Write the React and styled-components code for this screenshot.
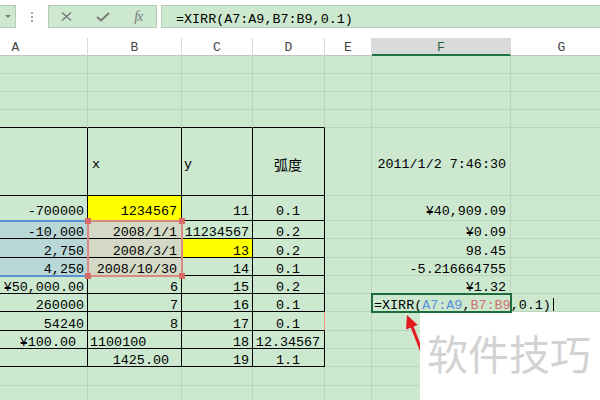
import React from 'react';
import styled, { createGlobalStyle } from 'styled-components';

const GREEN = '#cce8cf';
const GRID = '#b9d6bc';
const YELLOW = '#ffff00';
const BLUE_FILL = '#b9d7d6';
const PINK_FILL = '#d4d9c6';
const MONO = '"Liberation Mono", "DejaVu Sans Mono", monospace';
const CJK = '"Noto Sans CJK SC", "Noto Sans", sans-serif';

const COLS = ['A', 'B', 'C', 'D', 'E', 'F', 'G'];
const WIDTHS = [144, 94, 71, 72, 47, 139, 102];
const TEMPLATE = WIDTHS.map((w) => `${w}px`).join(' ');

const rows = [
  { h: 18 },
  { h: 18 },
  { h: 18 },
  { h: 18, edge: true },
  {
    h: 68, pb: 25, table: true, cells: {
      B: { t: 'x', a: 'left', pl: 4 },
      C: { t: 'y', a: 'left' },
      D: { t: '弧度', a: 'center', cjk: true },
      F: { t: '2011/1/2 7:46:30', pr: 4 },
    },
  },
  {
    h: 25, pb: 3, table: true, cells: {
      A: { t: '-700000' },
      B: { t: '1234567', bg: YELLOW, pr: 4 },
      C: { t: '11' },
      D: { t: '0.1', a: 'center' },
      F: { t: '¥40,909.09', pr: 4 },
    },
  },
  {
    h: 18, table: true, cells: {
      A: { t: '-10,000', bg: BLUE_FILL },
      B: { t: '2008/1/1', bg: PINK_FILL, pr: 4 },
      C: { t: '11234567' },
      D: { t: '0.2', a: 'center' },
      F: { t: '¥0.09', pr: 4 },
    },
  },
  {
    h: 19, table: true, cells: {
      A: { t: '2,750', bg: BLUE_FILL },
      B: { t: '2008/3/1', bg: PINK_FILL, pr: 4 },
      C: { t: '13', bg: YELLOW },
      D: { t: '0.2', a: 'center' },
      F: { t: '98.45', pr: 4 },
    },
  },
  {
    h: 18, table: true, cells: {
      A: { t: '4,250', bg: BLUE_FILL },
      B: { t: '2008/10/30', bg: PINK_FILL, pr: 4 },
      C: { t: '14' },
      D: { t: '0.1', a: 'center' },
      F: { t: '-5.216664755', pr: 4 },
    },
  },
  {
    h: 18, table: true, cells: {
      A: { t: '¥50,000.00' },
      B: { t: '6' },
      C: { t: '15' },
      D: { t: '0.2', a: 'center' },
      F: { t: '¥1.32', pr: 4 },
    },
  },
  {
    h: 18, table: true, cells: {
      A: { t: '260000' },
      B: { t: '7' },
      C: { t: '16' },
      D: { t: '0.1', a: 'center' },
      F: { edit: true },
    },
  },
  {
    h: 19, table: true, cells: {
      A: { t: '54240' },
      B: { t: '8' },
      C: { t: '17' },
      D: { t: '0.1', a: 'center', rb: '#f19a74' },
    },
  },
  {
    h: 18, table: true, cells: {
      A: { t: '¥100.00', pr: 11 },
      B: { t: '1100100', a: 'left' },
      C: { t: '18' },
      D: { t: '12.34567', a: 'center' },
    },
  },
  {
    h: 18, table: true, cells: {
      B: { t: '1425.00', pr: 12 },
      C: { t: '19' },
      D: { t: '1.1', a: 'center' },
    },
  },
  { h: 19 },
  { h: 18 },
];

const GlobalStyle = createGlobalStyle`
  html, body {
    margin: 0;
    padding: 0;
    background: #fff;
  }
  body {
    font-family: ${MONO};
  }
`;

const Page = styled.div`
  position: relative;
  width: 600px;
  height: 400px;
  overflow: hidden;
  background: #fff;
`;

const Toolbar = styled.div`
  display: flex;
  align-items: flex-start;
  height: 38px;
  padding-top: 5px;
  box-sizing: border-box;
`;

const NameTail = styled.div`
  width: 16px;
  height: 23px;
  box-sizing: border-box;
  background: ${GREEN};
  border: 1px solid #b7cbb8;
  border-left: none;
  display: flex;
  align-items: center;
  justify-content: center;

  &::after {
    content: '';
    border-left: 3px solid transparent;
    border-right: 3px solid transparent;
    border-top: 3px solid #777;
  }
`;

const Grip = styled.div`
  width: 32px;
  height: 23px;
  display: flex;
  flex-direction: column;
  align-items: center;
  justify-content: center;
  gap: 2px;
`;

const GripDot = styled.span`
  width: 2px;
  height: 2px;
  background: #a8a8a8;
`;

const IconBox = styled.div`
  width: 109px;
  height: 23px;
  box-sizing: border-box;
  background: ${GREEN};
  border: 1px solid #b7cbb8;
  display: flex;
  align-items: center;
`;

const IconSlot = styled.div`
  width: 37px;
  display: flex;
  justify-content: center;
  align-items: center;
  color: #777;
`;

const Fx = styled.span`
  font-family: "Liberation Serif", serif;
  font-style: italic;
  font-size: 14px;
  color: #7a7a7a;
  letter-spacing: -1px;
`;

const FormulaBox = styled.div`
  flex: 1;
  margin-left: 4px;
  height: 23px;
  box-sizing: border-box;
  background: ${GREEN};
  border: 1px solid #b7cbb8;
  border-right: none;
  display: flex;
  align-items: flex-end;
  padding: 0 0 2px 14px;
  font-size: 13.4px;
  line-height: 11px;
  color: #000;
  white-space: nowrap;
`;

const HeaderRow = styled.div`
  display: grid;
  grid-template-columns: ${TEMPLATE};
  height: 18px;
  margin-left: -56px;
  width: 669px;
`;

const HeaderCell = styled.div`
  box-sizing: border-box;
  display: flex;
  align-items: flex-end;
  justify-content: center;
  border-right: 1px solid #dadada;
  border-bottom: ${(p) => (p.$active ? '2px solid #217346' : '1px solid #c4c4c4')};
  background: ${(p) => (p.$active ? '#dadada' : '#fff')};
  color: ${(p) => (p.$active ? '#2b5e3b' : '#444')};
  font-size: 13px;
  line-height: 11px;
  padding-bottom: ${(p) => (p.$active ? 1 : 2)}px;
`;

const Sheet = styled.div`
  display: grid;
  grid-template-columns: ${TEMPLATE};
  grid-template-rows: ${(p) => p.$rows};
  margin-left: -56px;
  width: 669px;
  background: ${GREEN};
`;

const justify = { left: 'flex-start', center: 'center', right: 'flex-end' };

const Cell = styled.div`
  box-sizing: border-box;
  display: flex;
  align-items: flex-end;
  justify-content: ${(p) => justify[p.$align || 'right']};
  padding: 0 ${(p) => p.$pr}px ${(p) => p.$pb}px ${(p) => p.$pl}px;
  background: ${(p) => p.$bg || 'transparent'};
  border-right: 1px solid ${(p) => p.$rb};
  border-bottom: 1px solid ${(p) => p.$bb};
  font-family: ${(p) => (p.$cjk ? CJK : MONO)};
  font-size: ${(p) => (p.$cjk ? 14 : 13.4)}px;
  line-height: 11px;
  white-space: nowrap;
  color: #000;
  overflow: hidden;
`;

const EditCell = styled(Cell)`
  overflow: visible;
  position: relative;
  z-index: 2;
  outline: 2px solid #1e6b3e;
  outline-offset: -1px;
`;

const RefA = styled.span`
  color: #5b8fd6;
`;

const RefB = styled.span`
  color: #d0706c;
`;

const Caret = styled.span`
  display: inline-block;
  width: 1px;
  height: 13px;
  margin-left: 2px;
  background: #000;
  vertical-align: -2px;
`;

const Range = styled.div`
  position: absolute;
  top: 220px;
  height: 57px;
  box-sizing: border-box;
  left: ${(p) => p.$left}px;
  width: ${(p) => p.$width}px;
  border-top: 2px solid ${(p) => p.$color};
  border-bottom: 2px solid ${(p) => p.$color};
  border-left: ${(p) => (p.$sides ? `2px solid ${p.$color}` : 'none')};
  border-right: ${(p) => (p.$sides ? `2px solid ${p.$color}` : 'none')};
  pointer-events: none;
`;

const Handle = styled.span`
  position: absolute;
  width: 6px;
  height: 6px;
  background: #d66b67;
  ${(p) => (p.$top ? 'top: -4px;' : 'bottom: -4px;')}
  ${(p) => (p.$leftSide ? 'left: -4px;' : 'right: -4px;')}
`;

const Arrow = styled.svg`
  position: absolute;
  left: 398px;
  top: 310px;
`;

const Watermark = styled.div`
  position: absolute;
  left: 420px;
  top: 312px;
  right: 0;
  bottom: 0;
  background: #fff;
  padding: 20px 0 0 7px;
  font-family: ${CJK};
  font-size: 41px;
  line-height: 41px;
  color: #d2d2d2;
  white-space: nowrap;
`;

const FormulaText = ({ colored }) =>
  colored ? (
    <>
      =XIRR(<RefA>A7:A9</RefA>,<RefB>B7:B9</RefB>,0.1)
    </>
  ) : (
    <>=XIRR(A7:A9,B7:B9,0.1)</>
  );

function renderCell(row, ri, col, ci) {
  const c = (row.cells && row.cells[col]) || {};
  const boxed = row.table && ci < 4;
  const props = {
    key: `${ri}-${col}`,
    $align: c.a,
    $bg: c.bg,
    $pr: c.pr ?? 3,
    $pl: c.pl ?? 2,
    $pb: row.pb ?? 0,
    $rb: c.rb || (boxed ? '#000' : GRID),
    $bb: boxed || (row.edge && ci < 4) ? '#000' : GRID,
    $cjk: c.cjk,
  };
  if (c.edit) {
    return (
      <EditCell {...props} $align="left">
        <span>
          <FormulaText colored />
          <Caret />
        </span>
      </EditCell>
    );
  }
  return <Cell {...props}>{c.t}</Cell>;
}

export default function App() {
  return (
    <>
      <GlobalStyle />
      <Page>
        <Toolbar>
          <NameTail />
          <Grip>
            <GripDot />
            <GripDot />
            <GripDot />
          </Grip>
          <IconBox>
            <IconSlot>
              <svg width="11" height="9" viewBox="0 0 11 9">
                <path d="M1 0.5 L10 8.5 M10 0.5 L1 8.5" stroke="#7a7a7a" strokeWidth="1.4" fill="none" />
              </svg>
            </IconSlot>
            <IconSlot>
              <svg width="14" height="10" viewBox="0 0 14 10">
                <path d="M1 5 L5 8.5 L13 1" stroke="#7a7a7a" strokeWidth="2" fill="none" />
              </svg>
            </IconSlot>
            <IconSlot>
              <Fx>fx</Fx>
            </IconSlot>
          </IconBox>
          <FormulaBox>
            <FormulaText />
          </FormulaBox>
        </Toolbar>
        <HeaderRow>
          {COLS.map((c) => (
            <HeaderCell key={c} $active={c === 'F'}>{c}</HeaderCell>
          ))}
        </HeaderRow>
        <Sheet $rows={rows.map((r) => `${r.h}px`).join(' ')}>
          {rows.map((row, ri) => COLS.map((col, ci) => renderCell(row, ri, col, ci)))}
        </Sheet>
        <Range $left={0} $width={88} $color="#5b8fd0" />
        <Range $left={87} $width={96} $color="#d98a84" $sides>
          <Handle $top $leftSide />
          <Handle $top />
          <Handle $leftSide />
          <Handle />
        </Range>
        <Arrow width="40" height="60" viewBox="0 0 40 60">
          <line x1="13.8" y1="16" x2="27" y2="50" stroke="#e3191e" strokeWidth="3" />
          <polygon points="9,5 19.6,14.9 8,19.5" fill="#e3191e" />
        </Arrow>
        <Watermark>软件技巧</Watermark>
      </Page>
    </>
  );
}
